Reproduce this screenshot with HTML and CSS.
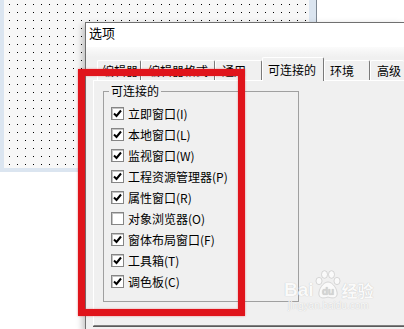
FILE: index.html
```html
<!DOCTYPE html>
<html lang="zh-CN">
<head>
    <meta charset="UTF-8">
    <title>选项</title>
    <link rel="stylesheet" href="styles.css">
</head>
<body>
    <!-- concepteur de feuille, en fond -->
    <div class="designer">
        <div class="form-grid">
            <svg width="305" height="168">
                <defs>
                    <pattern id="dots" x="5" y="4" width="8" height="8" patternUnits="userSpaceOnUse">
                        <rect width="1" height="1" fill="#000"/>
                    </pattern>
                </defs>
                <rect width="305" height="168" fill="url(#dots)"/>
            </svg>
        </div>
    </div>

    <div class="dialog">
        <div class="titlebar">选项</div>
        <div class="dialog-body">
            <div class="tabs">
                <div class="tab tab-editor">编辑器</div>
                <div class="tab tab-format">编辑器格式</div>
                <div class="tab tab-general">通用</div>
                <div class="tab tab-docking active">可连接的</div>
                <div class="tab tab-env">环境</div>
                <div class="tab tab-adv">高级</div>
            </div>
            <div class="tab-panel">
                <fieldset class="group">
                    <legend>可连接的</legend>
                    <div class="check-list">
                        <label class="check"><span class="box"><svg width="11" height="11"><path d="M2 5.5 L4.5 8 L9 2.5"/></svg></span>立即窗口(I)</label>
                        <label class="check"><span class="box"><svg width="11" height="11"><path d="M2 5.5 L4.5 8 L9 2.5"/></svg></span>本地窗口(L)</label>
                        <label class="check"><span class="box"><svg width="11" height="11"><path d="M2 5.5 L4.5 8 L9 2.5"/></svg></span>监视窗口(W)</label>
                        <label class="check"><span class="box"><svg width="11" height="11"><path d="M2 5.5 L4.5 8 L9 2.5"/></svg></span>工程资源管理器(P)</label>
                        <label class="check"><span class="box"><svg width="11" height="11"><path d="M2 5.5 L4.5 8 L9 2.5"/></svg></span>属性窗口(R)</label>
                        <label class="check"><span class="box"></span>对象浏览器(O)</label>
                        <label class="check"><span class="box"><svg width="11" height="11"><path d="M2 5.5 L4.5 8 L9 2.5"/></svg></span>窗体布局窗口(F)</label>
                        <label class="check"><span class="box"><svg width="11" height="11"><path d="M2 5.5 L4.5 8 L9 2.5"/></svg></span>工具箱(T)</label>
                        <label class="check"><span class="box"><svg width="11" height="11"><path d="M2 5.5 L4.5 8 L9 2.5"/></svg></span>调色板(C)</label>
                    </div>
                </fieldset>
            </div>
        </div>
    </div>

    <!-- cadre rouge d'annotation -->
    <div class="highlight"></div>

    <div class="watermark">
        <div class="wm-line">
            <span class="wm-bai">Bai</span>
            <svg class="wm-paw" width="30" height="30" viewBox="0 0 30 30">
                <ellipse cx="6" cy="11" rx="3" ry="3.6"/>
                <ellipse cx="11.5" cy="4.5" rx="3" ry="3.8"/>
                <ellipse cx="18.5" cy="4.5" rx="3" ry="3.8"/>
                <ellipse cx="24" cy="11" rx="3" ry="3.6"/>
                <path d="M15 12 C10 12 5 20 6 25 C7 29 12 28 15 27 C18 28 23 29 24 25 C25 20 20 12 15 12 Z"/>
                <text x="15" y="25" text-anchor="middle">du</text>
            </svg>
            <span class="wm-jy">经验</span>
        </div>
        <div class="wm-url">jingyan.baidu.com</div>
    </div>
</body>
</html>
```

FILE: styles.css
```css
body {
    margin: 0;
    width: 404px;
    height: 329px;
    overflow: hidden;
    position: relative;
    background-color: #fff;
    font-family: "Noto Sans CJK SC", sans-serif;
    color: #000;
}
.designer {
    width: 317px;
    height: 172px;
    box-sizing: border-box;
    padding-left: 4px;
    background-color: #dbe5f0;
    border-right: 1px solid #7d8792;
}
.form-grid {
    width: 305px;
    height: 168px;
    background-color: #f7f7f7;
}
.form-grid svg {
    display: block;
}
.dialog {
    position: absolute;
    left: 85px;
    top: 22px;
    width: 319px;
    height: 307px;
    overflow: hidden;
    background-color: #f0f0f0;
    border-top: 1px solid #707070;
    border-left: 1px solid #707070;
    box-shadow: -3px 2px 6px rgba(0, 0, 0, 0.22);
}
.titlebar {
    height: 24px;
    line-height: 20px;
    padding-left: 3px;
    font-size: 13px;
    background-color: #fff;
}
.dialog-body {
    padding: 10px 0 0 7px;
    background: linear-gradient(#fbfbfb, #f0f0f0 10px);
}
.tabs {
    display: flex;
    align-items: flex-end;
    height: 23px;
    margin-left: 4px;
}
.tab {
    height: 20px;
    box-sizing: border-box;
    padding: 2px 0 0 5px;
    font-size: 12px;
    line-height: 16px;
    white-space: nowrap;
    background-color: #f0f0f0;
    border-top: 1px solid #fff;
    border-left: 1px solid #fff;
    border-right: 1px solid #7a7a7a;
    border-radius: 2px 2px 0 0;
}
.tab-editor { width: 44px; padding-left: 4px; }
.tab-format { width: 74px; padding-left: 6px; }
.tab-general { width: 47px; padding-left: 6px; }
.tab-docking { width: 62px; }
.tab-env { width: 46px; }
.tab-adv { width: 34px; padding-left: 6px; border-right: none; }
.tab.active {
    height: 24px;
    margin-bottom: -1px;
    padding-top: 4px;
    position: relative;
    z-index: 1;
}
.tab-panel {
    height: 246px;
    box-sizing: border-box;
    padding: 3px 0 0 9px;
    border-top: 1px solid #fff;
    border-left: 1px solid #fff;
    border-bottom: 1px solid #808080;
    box-shadow: 0 1px 0 #5a5a5a;
}
.group {
    width: 196px;
    height: 218px;
    box-sizing: border-box;
    margin: 0;
    padding: 0;
    min-inline-size: 0;
    border: 1px solid #a0a0a0;
}
.group legend {
    margin-left: 5px;
    padding: 0 2px;
    font-size: 12px;
    line-height: 14px;
}
.check-list {
    padding: 5px 0 0 7px;
}
.check {
    display: flex;
    align-items: center;
    gap: 4px;
    height: 21px;
    font-size: 12px;
    line-height: 14px;
    white-space: nowrap;
}
.box {
    width: 13px;
    height: 13px;
    box-sizing: border-box;
    flex: none;
    background-color: #fff;
    border: 1px solid #858585;
    box-shadow: inset 1px 1px 0 #c4c4c4;
}
.box svg {
    display: block;
}
.box path {
    fill: none;
    stroke: #000;
    stroke-width: 2;
}
.highlight {
    position: absolute;
    left: 78px;
    top: 69px;
    width: 167px;
    height: 247px;
    box-sizing: border-box;
    border: 7px solid #e0141b;
    box-shadow: 0 0 2px rgba(224, 20, 27, 0.45), inset 0 0 2px rgba(224, 20, 27, 0.45);
    z-index: 5;
}
.watermark {
    position: absolute;
    left: 284px;
    top: 270px;
    color: #fafafa;
    text-shadow: 0 0 1px #b8b8b8;
    z-index: 4;
}
.wm-line {
    display: flex;
    align-items: flex-end;
}
.wm-bai {
    font-family: "Liberation Sans", sans-serif;
    font-weight: bold;
    font-size: 19px;
    line-height: 20px;
}
.wm-paw {
    display: block;
    margin: 0 -1px 0 -1px;
}
.wm-paw ellipse,
.wm-paw path {
    fill: #fafafa;
    stroke: #c0c0c0;
    stroke-width: 0.6;
}
.wm-paw text {
    font-family: "Liberation Sans", sans-serif;
    font-weight: bold;
    font-size: 10px;
    fill: #d4d4d4;
}
.wm-jy {
    font-size: 16px;
    line-height: 20px;
    font-weight: bold;
}
.wm-url {
    font-family: "Liberation Sans", sans-serif;
    font-size: 10px;
    line-height: 12px;
    margin-left: 4px;
}
```
